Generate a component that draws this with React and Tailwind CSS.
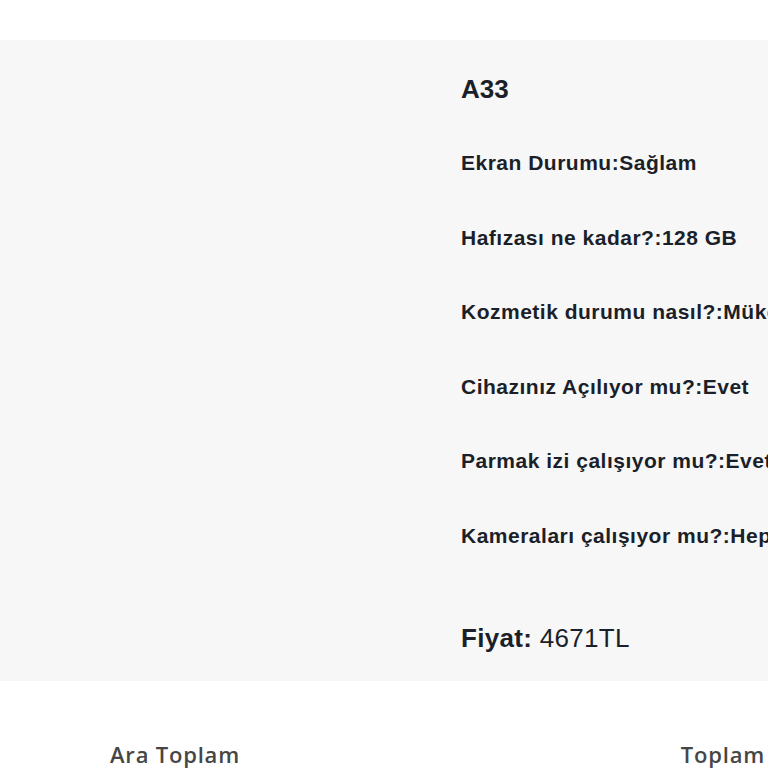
export default function App() {
  const rows = [
    ['Ekran Durumu', 'Sağlam'],
    ['Hafızası ne kadar?', '128 GB'],
    ['Kozmetik durumu nasıl?', 'Mükemmel'],
    ['Cihazınız Açılıyor mu?', 'Evet'],
    ['Parmak izi çalışıyor mu?', 'Evet'],
    ['Kameraları çalışıyor mu?', 'Hepsi çalışıyor'],
  ]

  return (
    <div className="w-[768px] h-[768px] overflow-hidden bg-white" style={{ fontFamily: '"Liberation Sans", Arial, sans-serif' }}>
      <div className="h-10" />
      <section className="h-[641px] bg-[#f7f7f7] flex">
        <div className="w-[461px] shrink-0" />
        <div className="flex-1 min-w-0 overflow-hidden whitespace-nowrap text-[#1b1f29]">
          <h2 className="text-[26px] font-bold leading-none mt-[36px]">A33</h2>
          <div className="mt-[50px] flex flex-col gap-[52px]">
            {rows.map(([q, a]) => (
              <p key={q} className="text-[21px] font-bold leading-[22.5px] tracking-[0.5px]">
                {q}:{a}
              </p>
            ))}
          </div>
          <p className="mt-[78px] text-[26px] leading-none tracking-[0.3px]">
            <span className="font-bold">Fiyat:</span> 4671TL
          </p>
        </div>
      </section>
      <div className="flex justify-between items-start pt-[57px] pl-[110px] pr-[3px] text-[22px] font-semibold tracking-[0.8px] text-[#464646] whitespace-nowrap" style={{ fontFamily: '"Open Sans", sans-serif' }}>
        <span>Ara Toplam</span>
        <span>Toplam</span>
      </div>
    </div>
  )
}
